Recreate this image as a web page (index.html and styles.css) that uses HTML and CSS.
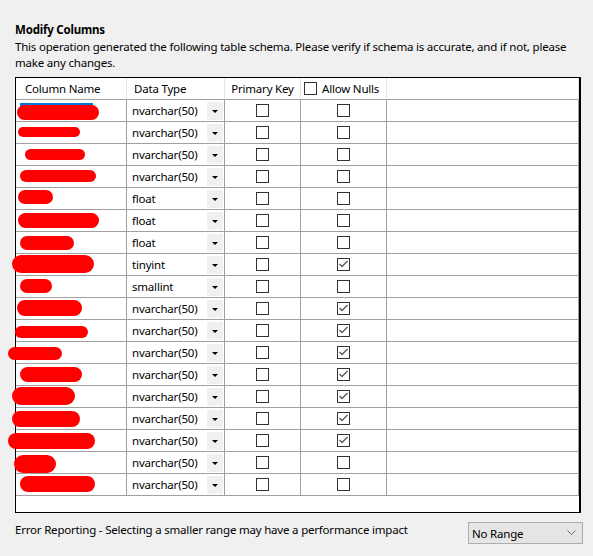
FILE: index.html
```html
<!DOCTYPE html>
<html>
<head>
  <title>Modify Columns</title>
  <link rel="stylesheet" href="styles.css">
</head>
<body>
  <div class="page">
    <h3 class="title">Modify Columns</h3>
    <p class="desc">This operation generated the following table schema. Please verify if schema is accurate, and if not, please make any changes.</p>

    <!-- grid kolom -->
    <div class="grid">
      <div class="row head">
        <div class="cell">Column Name</div>
        <div class="cell">Data Type</div>
        <div class="cell center">Primary Key</div>
        <div class="cell"><span class="box"></span>Allow Nulls</div>
        <div class="cell"></div>
      </div>
      <div id="rows"></div>
    </div>

    <div class="footer">
      <span class="note">Error Reporting - Selecting a smaller range may have a performance impact</span>
      <div class="select">
        <span>No Range</span>
        <svg width="9" height="6" viewBox="0 0 9 6"><polyline points="0.5,0.5 4.5,4.5 8.5,0.5" fill="none" stroke="#707070" stroke-width="1"/></svg>
      </div>
    </div>
  </div>

  <script>
    // data: tipe, allow nulls, coretan merah [left, top, width, height]
    var data = [
      ["nvarchar(50)", 0, [1, 5, 82, 15]],
      ["nvarchar(50)", 0, [2, 5, 62, 10]],
      ["nvarchar(50)", 0, [9, 5, 60, 11]],
      ["nvarchar(50)", 0, [4, 4, 76, 12]],
      ["float", 0, [2, 2, 35, 14]],
      ["float", 0, [2, 3, 81, 15]],
      ["float", 0, [4, 4, 54, 14]],
      ["tinyint", 1, [-4, 1, 82, 18]],
      ["smallint", 0, [4, 3, 32, 14]],
      ["nvarchar(50)", 1, [1, 2, 65, 16]],
      ["nvarchar(50)", 1, [-1, 6, 73, 12]],
      ["nvarchar(50)", 1, [-8, 5, 54, 13]],
      ["nvarchar(50)", 1, [4, 3, 62, 15]],
      ["nvarchar(50)", 1, [-4, 1, 63, 18]],
      ["nvarchar(50)", 1, [-4, 3, 68, 16]],
      ["nvarchar(50)", 1, [-8, 3, 87, 16]],
      ["nvarchar(50)", 0, [-2, 3, 42, 18]],
      ["nvarchar(50)", 0, [4, 2, 75, 16]]
    ];

    var tick = '<svg width="11" height="11" viewBox="0 0 11 11"><polyline points="1.5,5 4,7.5 9.5,2" fill="none" stroke="#555" stroke-width="1.3"/></svg>';
    var html = "";
    for (var i = 0; i < data.length; i++) {
      var d = data[i], b = d[2];
      var sel = i == 0 ? '<span class="sel"></span>' : '';
      html += '<div class="row">' +
        '<div class="cell name">' + sel + '<span class="blot" style="left:' + b[0] + 'px;top:' + b[1] + 'px;width:' + b[2] + 'px;height:' + b[3] + 'px"></span></div>' +
        '<div class="cell type"><span>' + d[0] + '</span><span class="drop"></span></div>' +
        '<div class="cell center"><span class="box"></span></div>' +
        '<div class="cell center"><span class="box">' + (d[1] ? tick : '') + '</span></div>' +
        '<div class="cell"></div>' +
        '</div>';
    }
    document.getElementById("rows").innerHTML = html;
  </script>
</body>
</html>
```

FILE: styles.css
```css
body {
  margin: 0;
  background-color: #f0f0f0;
  font-family: "Noto Sans", "Open Sans", sans-serif;
  font-size: 11.5px;
  letter-spacing: -0.2px;
  color: #000;
}

.page {
  padding: 22px 12px 0 15px;
}

.title {
  margin: 0;
  font-size: 11.5px;
  line-height: 16px;
  font-weight: bold;
}

.desc {
  margin: 1px 0 0 0;
  line-height: 16px;
}

/* grid kolom */
.grid {
  margin-top: 6px;
  height: 434px;
  background-color: #fff;
  border: 1px solid #000;
  border-right-width: 2px;
}

.row {
  display: grid;
  grid-template-columns: 111px 98px 76px 86px 1fr;
  height: 22px;
}

.cell {
  box-sizing: border-box;
  border-right: 1px solid #a0a0a0;
  border-bottom: 1px solid #a0a0a0;
  display: flex;
  align-items: center;
  position: relative;
}

.head .cell {
  border-right-color: #e5e5e5;
  padding-left: 7px;
}

.head .cell:first-child {
  padding-left: 9px;
}

.head .cell:nth-child(4) {
  padding-left: 3px;
}

.head .box {
  margin-right: 5px;
}

.center {
  justify-content: center;
}

.head .center {
  padding-left: 0;
}

.type {
  padding-left: 5px;
  justify-content: space-between;
}

.drop {
  width: 16px;
  height: 18px;
  margin-right: 1px;
  background-color: #f0f0f0;
  position: relative;
}

.drop::after {
  content: "";
  position: absolute;
  left: 5px;
  top: 8px;
  border-left: 3px solid transparent;
  border-right: 3px solid transparent;
  border-top: 3px solid #000;
}

.box {
  box-sizing: border-box;
  width: 13px;
  height: 13px;
  border: 1px solid #333;
  background-color: #fff;
  display: flex;
  align-items: center;
  justify-content: center;
}

/* coretan merah */
.blot {
  position: absolute;
  background-color: #ff0000;
  border-radius: 9px;
}

.sel {
  position: absolute;
  left: 4px;
  top: 3px;
  width: 73px;
  height: 14px;
  background-color: #0078d7;
}

.footer {
  display: flex;
  justify-content: space-between;
  align-items: flex-start;
  margin: 9px -2px 0 0;
}

.note {
  line-height: 16px;
}

.select {
  box-sizing: border-box;
  width: 115px;
  height: 22px;
  border: 1px solid #adadad;
  background-color: #e5e5e5;
  display: flex;
  align-items: center;
  justify-content: space-between;
  padding: 0 6px 0 3px;
}
```
